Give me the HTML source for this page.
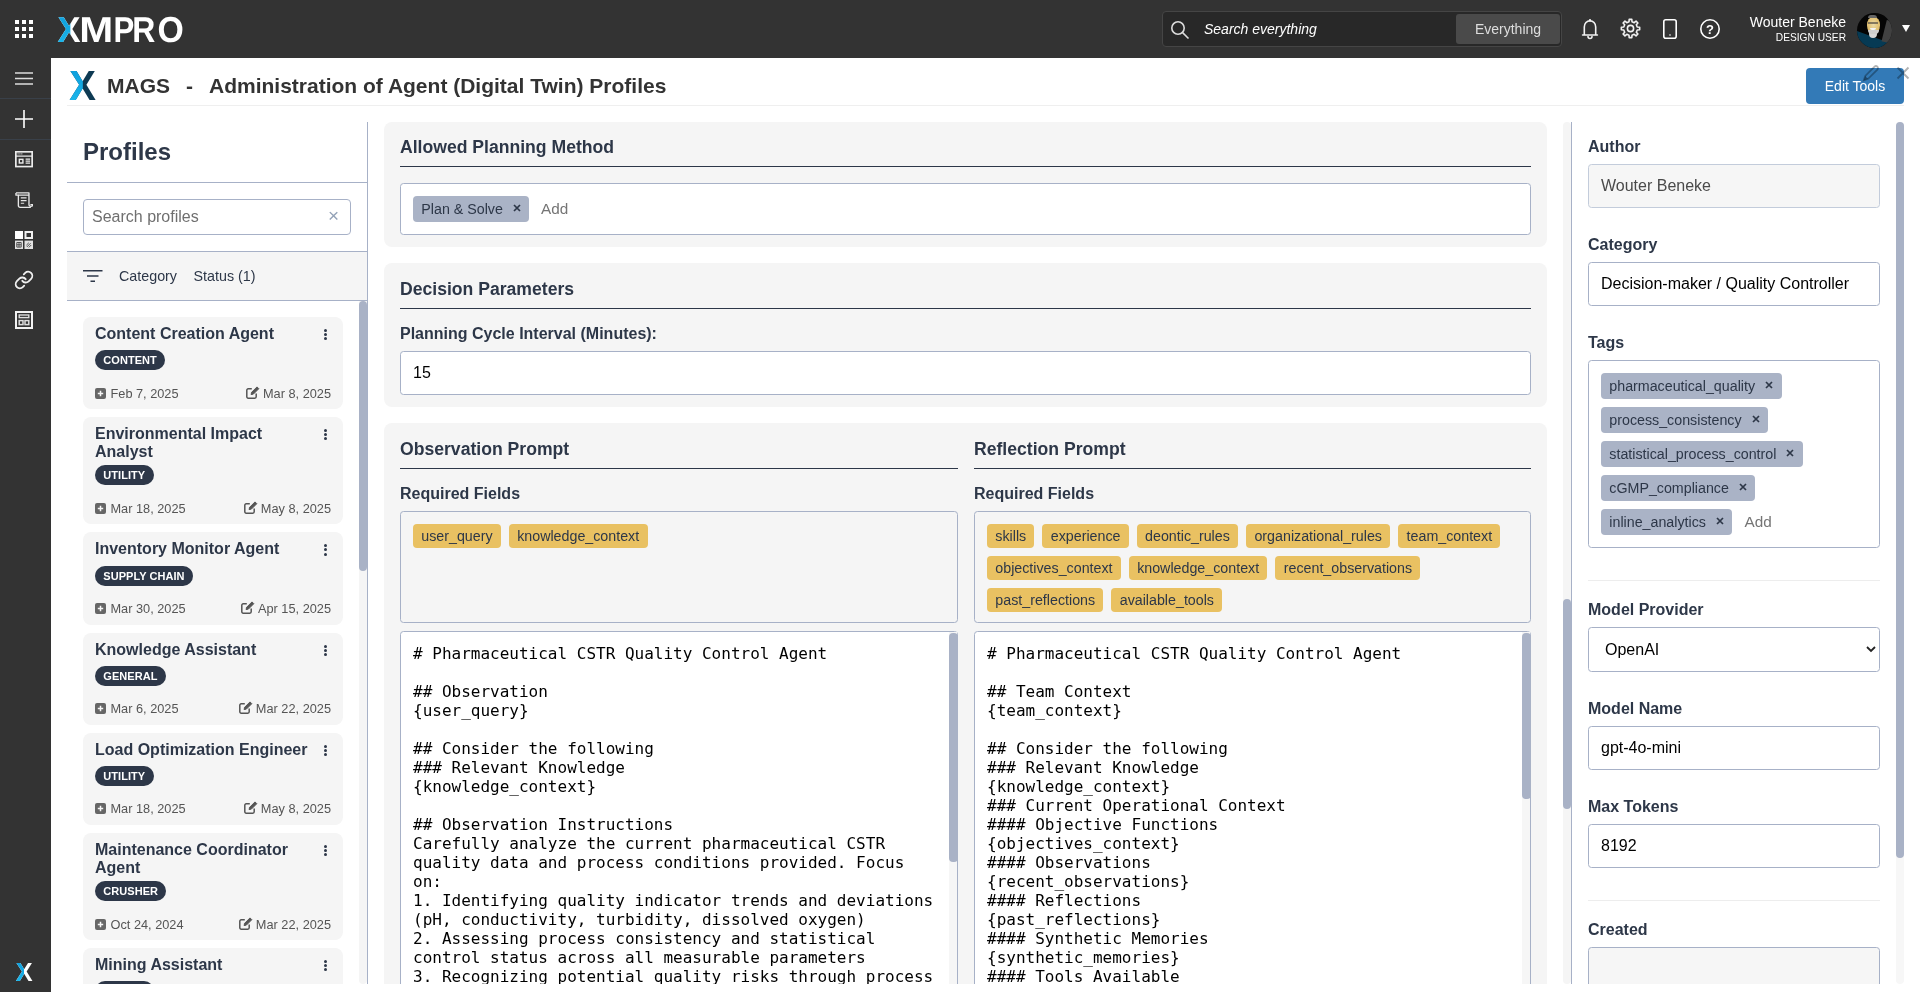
<!DOCTYPE html>
<html lang="en">
<head>
<meta charset="utf-8">
<title>MAGS - Administration of Agent (Digital Twin) Profiles</title>
<style>
*{box-sizing:border-box;margin:0;padding:0}
html,body{width:1920px;height:992px;overflow:hidden;background:#fff;font-family:"Liberation Sans",Arial,sans-serif;color:#2d3748}
#root{position:absolute;left:0;top:0;width:1920px;height:992px;will-change:transform}
#topbar{position:absolute;left:0;top:0;width:1920px;height:58px;background:#333}
#sidebar{position:absolute;left:0;top:58px;width:51px;height:934px;background:#333}
#sidebar .sep{position:absolute;left:0;width:51px;height:1px;background:#394049}
svg{display:block}
.ico{position:absolute}
#logo{position:absolute;left:57px;top:8px;font-size:36px;line-height:42px;font-weight:bold;color:#fff;letter-spacing:-1.8px}
#logo .x{background:linear-gradient(90deg,#19b5e9 0,#19b5e9 46%,#fff 46%);-webkit-background-clip:text;background-clip:text;color:transparent}
#xlogo{position:absolute;left:15px;top:902px;font-size:23px;font-weight:bold;line-height:24px;background:linear-gradient(90deg,#19b5e9 0,#19b5e9 50%,#fff 50%);-webkit-background-clip:text;background-clip:text;color:transparent}
#avatar{position:absolute;left:1857px;top:12.500px;width:35px;height:35px;border-radius:50%;background:#050505;overflow:hidden}
#avatar i{position:absolute;display:block}
#avatar .t{left:-8px;top:15px;width:48px;height:30px;background:#063a54;transform:rotate(20deg);transform-origin:0 0}
#avatar .g{left:27px;top:8px;width:12px;height:22px;background:#414141;transform:rotate(14deg)}
#avatar .n{left:11.500px;top:19px;width:8px;height:6px;background:#d8d8d8;border-radius:2px 2px 5px 5px}
#avatar .f{left:9.500px;top:4px;width:13px;height:17px;border-radius:45% 45% 50% 50%;background:radial-gradient(ellipse at 50% 45%,#ead9a6 0,#e3c273 55%,#caa861 100%)}
#avatar .h{left:11px;top:2.500px;width:9px;height:3px;border-radius:4px 4px 0 0;background:#666}
#avatar .e{left:11px;top:9.500px;width:10px;height:1.500px;background:#6b6250;opacity:.8}
#avatar .m{left:13px;top:15.500px;width:6px;height:2px;background:#f3f3f3;border-radius:0 0 3px 3px}
#avatar .b{left:10.500px;top:17px;width:11px;height:4px;border-radius:0 0 6px 6px;background:#cfcfcf}
/* top bar */
#search{position:absolute;left:1162px;top:11px;width:400px;height:36px;background:#282828;border:1px solid #454545;border-radius:4px}
#search .ph{position:absolute;left:41px;top:0;line-height:34px;font-size:14px;font-style:italic;color:#fff}
#search .btn{position:absolute;left:293px;top:2px;width:104px;height:30px;background:#4a4a4a;border-radius:3px;color:#ddd;font-size:14px;line-height:30px;text-align:center}
#user{position:absolute;right:74px;top:13px;text-align:right;color:#fff}
#user .n{font-size:14px;line-height:18px}
#user .r{font-size:10.200px;line-height:13px;margin-top:0}
/* header */
#hdr{position:absolute;left:67px;top:58px;width:1837px;height:48px;border-bottom:1px solid #efefef}
#hdr .t{position:absolute;left:40px;top:15px;font-size:21px;font-weight:bold;color:#333;white-space:pre;line-height:26px}
#editbtn{position:absolute;left:1806px;top:68px;width:98px;height:36px;background:#337ab7;border-radius:4px;color:#fff;font-size:14px;line-height:36px;text-align:center}
/* left panel */
#left{position:absolute;left:67px;top:122px;width:301px;height:862px;border-right:1px solid #a7b1c7;overflow:hidden}
#left h2{position:absolute;left:16px;top:16px;font-size:24px;line-height:28px;font-weight:bold;color:#2d3748}
#left .hl{position:absolute;left:0;width:300px;height:1px;background:#a7b1c7}
#sp{position:absolute;left:16px;top:77px;width:268px;height:36px;border:1px solid #a7b1c7;border-radius:4px;font-size:16px;line-height:34px;padding-left:8px;color:#6f6f6f}
#sp span{position:absolute;right:11px;top:-1px;color:#94a3b8;font-size:19px}
#fbar{position:absolute;left:0;top:130px;width:300px;height:48px;background:#f5f5f5;font-size:14.300px;line-height:48px;color:#2d3748}
#list{position:absolute;left:0;top:179px;width:300px;height:683px;overflow:hidden;padding-top:16px}
.pc{position:relative;margin:0 0 8px 16px;width:260px;background:#f5f5f5;border-radius:8px;padding:8px 12px 8.620px}
.pc .tr{min-height:21px}
.pc .ti{font-size:16px;font-weight:bold;line-height:18px;color:#2d3748;white-space:nowrap}
.pc .bd{display:inline-block;vertical-align:top;background:#2d3748;color:#fff;font-size:11px;font-weight:bold;border-radius:10px;height:20px;line-height:20px;padding:0 8.300px;margin-top:4.200px;letter-spacing:.05px}
.pc .dt{display:flex;justify-content:space-between;font-size:12.750px;color:#555;line-height:16px;height:15px;margin-top:15.400px}
.pc .dt svg{display:inline-block;vertical-align:-1px;margin-right:4.500px}
.pc .dt .d2 svg{vertical-align:-1px;margin-right:3px}
.pc .kb{position:absolute;left:240.500px;top:12px;width:3px}
.pc .kb i{display:block;width:3px;height:3px;border-radius:50%;background:#2d3748;margin-bottom:1.100px}
.sbt{position:absolute;width:8px;background:#f7f7f7}
/* middle */
#mid{position:absolute;left:384px;top:122px;width:1163px;height:862px;overflow:hidden}
.card{position:absolute;left:0;width:1163px;background:#f5f5f5;border-radius:8px}
.card h3{position:absolute;font-size:17.600px;font-weight:bold;color:#2d3748;line-height:20px}
.ul{position:absolute;height:1px;background:#2d3748}
.lbl{position:absolute;font-size:16px;font-weight:bold;color:#2d3748;line-height:20px}
.box{position:absolute;background:#fff;border:1px solid #a7b1c7;border-radius:3.500px}
.tag{display:inline-block;background:#aab3c6;color:#2d3748;border-radius:4px;font-size:14.250px;line-height:26px;height:26px;padding:0 8.500px 0 8.300px;white-space:nowrap}
.ytag{display:inline-block;vertical-align:top;background:#e9c162;color:#2d3748;border-radius:4px;font-size:14.250px;line-height:24px;height:24px;padding:0 8.300px;margin:0 8px 8px 0}
.ta{position:absolute;background:#fff;border:1px solid #a7b1c7;border-radius:3.500px;font-family:"DejaVu Sans Mono","Liberation Mono",monospace;font-size:16px;line-height:19px;color:#000;white-space:pre;padding:12px 12px;overflow:hidden}
/* right */
#right{position:absolute;left:1571px;top:122px;width:334px;height:862px;border-left:1px solid #a7b1c7;overflow:hidden}
#right .lbl{left:16px}
#right .inp{position:absolute;left:16px;width:292px;height:44px;border:1px solid #a7b1c7;border-radius:3.500px;background:#fff;font-size:16px;line-height:42px;padding-left:12px;color:#000}
.sb{position:absolute;width:7px;border-radius:4px;background:#a9b2c6}
.tag .tx{display:inline-block;margin-left:10px;vertical-align:2px}
.add{position:absolute;font-size:15.300px;line-height:26px;color:#757575}
.inp{font-size:16px;line-height:42px;padding-left:12px;color:#000}
.ybox{background:#f5f5f5;padding:12px 0 0 12px}
.trow{height:34px;white-space:nowrap}
.trow .tag{vertical-align:top}
.hr{position:absolute;left:16px;width:292px;height:1px;background:#ededed}
#right .dis{background:#f6f6f6;color:#4a4a4a;border-color:#c3ccdb}
</style>
</head>
<body><div id="root">
<div id="topbar">
<svg class="ico" style="left:15px;top:20px" width="18" height="18" viewBox="0 0 18 18" fill="#fff"><rect x="0" y="0" width="4" height="4"/><rect x="7" y="0" width="4" height="4"/><rect x="14" y="0" width="4" height="4"/><rect x="0" y="7" width="4" height="4"/><rect x="7" y="7" width="4" height="4"/><rect x="14" y="7" width="4" height="4"/><rect x="0" y="14" width="4" height="4"/><rect x="7" y="14" width="4" height="4"/><rect x="14" y="14" width="4" height="4"/></svg>
<svg id="logo" class="ico" style="left:50px;top:8px;text-rendering:geometricPrecision" width="140" height="42" viewBox="0 0 140 42" font-family="Liberation Sans, Arial, sans-serif" font-weight="bold" font-size="35.5"><title>XMPRO</title><defs><clipPath id="lh"><rect x="0" y="-40" width="13.300" height="60"/></clipPath><linearGradient id="cy" x1="0" y1="0" x2="0" y2="1"><stop offset="0" stop-color="#0d9cd9"/><stop offset=".5" stop-color="#14a9e3"/><stop offset="1" stop-color="#1fbdf0"/></linearGradient></defs><text transform="translate(7.60 33.500) scale(0.959 1)" fill="#fff">X</text><text transform="translate(29.21 33.500) scale(1.132 1)" fill="#fff">M</text><text transform="translate(63.54 33.500) scale(0.866 1)" fill="#fff">P</text><text transform="translate(82.29 33.500) scale(0.887 1)" fill="#fff">R</text><text transform="translate(107.38 33.500) scale(0.938 1)" fill="#fff">O</text><text transform="translate(7.60 33.500) scale(0.959 1)" fill="url(#cy)" clip-path="url(#lh)">X</text></svg>
<div id="search">
<svg class="ico" style="left:7px;top:8px" width="20" height="20" viewBox="0 0 20 20" fill="none" stroke="#ddd" stroke-width="1.6"><circle cx="8" cy="8" r="6.2"/><path d="M12.6 12.6 L18.5 18.5"/></svg>
<div class="ph">Search everything</div><div class="btn">Everything</div></div>
<svg class="ico" style="left:1580px;top:16px" width="20" height="24" viewBox="0 0 20 24" fill="none" stroke="#f2f2f2" stroke-width="1.600" stroke-linejoin="round" stroke-linecap="round"><path d="M2.600 19h14.800M4.300 19v-8a5.700 6.300 0 0 1 11.400 0v8"/><path d="M8 20.500a2 2 0 0 0 4 0"/><path d="M10 4.100v.6" stroke-width="2.200"/></svg>
<svg class="ico" style="left:1619.500px;top:18.200px" width="21" height="21" viewBox="0 0 21 21" fill="none" stroke="#f2f2f2" stroke-width="1.600" stroke-linejoin="round"><path d="M8.99 3.77 L9.20 1.34 L11.80 1.34 L12.01 3.77 L14.20 4.67 L16.05 3.10 L17.90 4.95 L16.33 6.80 L17.23 8.99 L19.66 9.20 L19.66 11.80 L17.23 12.01 L16.33 14.20 L17.90 16.05 L16.05 17.90 L14.20 16.33 L12.01 17.23 L11.80 19.66 L9.20 19.66 L8.99 17.23 L6.80 16.33 L4.95 17.90 L3.10 16.05 L4.67 14.20 L3.77 12.01 L1.34 11.80 L1.34 9.20 L3.77 8.99 L4.67 6.80 L3.10 4.95 L4.95 3.10 L6.80 4.67Z"/><circle cx="10.500" cy="10.500" r="3.100"/></svg>
<svg class="ico" style="left:1662px;top:18px" width="16" height="22" viewBox="0 0 16 22" fill="none" stroke="#fff" stroke-width="1.6"><rect x="1.800" y="1.800" width="12.400" height="18.400" rx="2"/><circle cx="8" cy="17" r=".8" fill="#fff" stroke="none"/></svg>
<svg class="ico" style="left:1699px;top:18px" width="22" height="22" viewBox="0 0 22 22" fill="none" stroke="#fff" stroke-width="1.6"><circle cx="11" cy="11" r="9.200"/><text x="11" y="15.500" font-family="Liberation Sans, sans-serif" font-size="13" font-weight="bold" fill="#fff" stroke="none" text-anchor="middle">?</text></svg>
<div id="user"><div class="n">Wouter Beneke</div><div class="r">DESIGN USER</div></div>
<div id="avatar"><i class="t"></i><i class="g"></i><i class="n"></i><i class="f"></i><i class="h"></i><i class="e"></i><i class="b"></i><i class="m"></i></div>
<svg class="ico" style="left:1902px;top:25px" width="8" height="7" viewBox="0 0 8 7"><path d="M0 0h8L4 7z" fill="#fff"/></svg>
</div>
<div id="sidebar">
<svg class="ico" style="left:15px;top:14px" width="18" height="13" viewBox="0 0 18 13" stroke="#ddd" stroke-width="1.500"><path d="M0 1h18M0 6.500h18M0 12h18"/></svg>
<div class="sep" style="top:40px"></div>
<svg class="ico" style="left:15px;top:52px" width="18" height="18" viewBox="0 0 18 18" stroke="#fff" stroke-width="1.600"><path d="M0 9h18M9 0v18"/></svg>
<div class="sep" style="top:81px"></div>
<svg class="ico" style="left:15px;top:93.400px" width="18" height="16.400" preserveAspectRatio="none" viewBox="0 0 18 17" fill="none" stroke="#ececec" stroke-width="1.700"><rect x=".85" y=".85" width="16.300" height="15.300"/><path d="M.85 5.300h16.300" stroke-width="1.300"/><path d="M2.600 3h.9M4.500 3h.9M6.400 3h.9" stroke-width="1.300"/><rect x="3.600" y="7.900" width="5" height="5.300" fill="#ececec" stroke="none"/><rect x="5" y="9.400" width="2.200" height="2.300" fill="#333" stroke="none"/><path d="M10.600 8.500h4.500M10.600 10.550h4.500M10.600 12.600h4.500" stroke-width="1.300"/></svg>
<svg class="ico" style="left:15px;top:133.800px" width="18.300" height="16.200" preserveAspectRatio="none" viewBox="0 0 19 18" fill="none" stroke="#e8e8e8" stroke-width="1.400" stroke-linejoin="round"><path d="M1 1h13.500v13a2 2 0 0 0 4 0h-2.500"/><path d="M3.500 3v12a2 2 0 0 0 2 2h11"/><path d="M1 1v2.500h13.500"/><path d="M6 6.500h6M6 9.500h6M6 12.500h3.500" stroke-width="1.300"/></svg>
<svg class="ico" style="left:15px;top:173px" width="18" height="18" viewBox="0 0 18 18" fill="none"><rect x="0" y="0" width="8" height="8" fill="#fff"/><rect x="10.500" y="1" width="6.500" height="6" stroke="#f0f0f0" stroke-width="2"/><rect x="0" y="9.600" width="8" height="8.400" fill="#e2e2e2"/><path d="M1.800 11.500h4.400v4.600h-4.400zM1.800 13.800h4.400M4 11.500v4.600" stroke="#444" stroke-width=".9"/><rect x="9.500" y="9.600" width="8.500" height="8.400" fill="#e2e2e2"/><path d="M11.800 16l3.800-3.800M11.400 14.200l2.400-2.400M13.800 16.400l2.400-2.400" stroke="#444" stroke-width=".9"/></svg>
<svg class="ico" style="left:14px;top:212px" width="20" height="20" viewBox="0 0 24 24" fill="none" stroke="#f0f0f0" stroke-width="2.200" stroke-linecap="round" stroke-linejoin="round"><path d="M10 13a5 5 0 0 0 7.540.54l3-3a5 5 0 0 0-7.070-7.070l-1.720 1.710"/><path d="M14 11a5 5 0 0 0-7.540-.54l-3 3a5 5 0 0 0 7.070 7.070l1.710-1.710"/></svg>
<svg class="ico" style="left:15px;top:253px" width="18" height="18" viewBox="0 0 18 18" fill="none" stroke="#f2f2f2" stroke-width="2"><rect x="1" y="1" width="16" height="16"/><rect x="4.200" y="4" width="9.600" height="2.600" stroke-width="1.400" stroke="#dcdcdc"/><rect x="4.200" y="9.600" width="3.800" height="4" stroke-width="1.500" stroke="#dcdcdc"/><rect x="10" y="9.600" width="3.800" height="4" stroke-width="1.500" stroke="#dcdcdc"/></svg>
<svg class="ico" style="left:10px;top:900px" width="30" height="28" viewBox="0 0 30 28" font-family="Liberation Sans, Arial, sans-serif" font-weight="bold" font-size="25.300"><defs><clipPath id="lh2"><rect x="0" y="0" width="14" height="28"/></clipPath></defs><text y="22.600" x="5.800" fill="#fff">X</text><text y="22.600" x="5.800" fill="url(#cy)" clip-path="url(#lh2)">X</text></svg>
</div>
<div id="hdr"><svg class="ico" style="left:0;top:8px" width="34" height="40" viewBox="0 0 34 40" font-family="Liberation Sans, Arial, sans-serif" font-weight="bold" font-size="42.200"><defs><clipPath id="lh3"><rect x="0" y="-40" width="14.300" height="60"/></clipPath></defs><text transform="translate(2.250 34.400) scale(.95 1)" fill="#0e3a53">X</text><text transform="translate(2.250 34.400) scale(.95 1)" fill="url(#cy)" clip-path="url(#lh3)">X</text></svg><div class="t">MAGS</div><div class="t" style="left:119px">-</div><div class="t" style="left:142px">Administration of Agent (Digital Twin) Profiles</div></div>
<div id="editbtn">Edit Tools</div>
<svg class="ico" style="left:1858px;top:60px" width="56" height="26" viewBox="0 0 56 26" fill="none" stroke="rgba(0,0,0,.3)" stroke-width="1.800"><g transform="translate(12.600 13.500) rotate(45)"><path d="M-2 -7.600a2 2 0 0 1 4 0V5.500L0 9.600L-2 5.500Z"/><path d="M-2 5.500L0 9.600L2 5.500Z" fill="rgba(0,0,0,.3)" stroke="none"/></g><path d="M39.500 7.500l11 11M50.500 7.500l-11 11" stroke-width="1.900"/></svg>
<div id="left">
<h2>Profiles</h2>
<div class="hl" style="top:60px"></div>
<div id="sp">Search profiles<span>&#215;</span></div>
<div class="hl" style="top:129px"></div>
<div id="fbar"><svg class="ico" style="left:16px;top:18px" width="20" height="12" viewBox="0 0 20 12" stroke="#2d3748" stroke-width="1.400"><path d="M0 .8h19.500M4 6h11.500M7.500 11.200h4.500"/></svg><span style="position:absolute;left:52px">Category</span><span style="position:absolute;left:126.500px">Status (1)</span></div>
<div class="hl" style="top:178px"></div>
<div id="list">
<div class="pc"><div class="tr"><div class="ti">Content Creation Agent</div></div><div class="kb"><i></i><i></i><i></i></div><div class="bd">CONTENT</div><div class="dt"><span class="d1"><svg width="11" height="11" viewBox="0 0 11 11"><rect width="11" height="11" rx="2" fill="#666"/><path d="M5.500 2.800v5.400M2.800 5.500h5.400" stroke="#f5f5f5" stroke-width="1.500"/></svg>Feb 7, 2025</span><span class="d2"><svg width="14" height="13" viewBox="0 0 14 13" fill="none" stroke="#555" stroke-width="1.500" stroke-linejoin="round"><path d="M10.200 7.500v3.300a1.400 1.400 0 0 1-1.400 1.400h-6.600a1.400 1.400 0 0 1-1.400-1.400v-6.600a1.400 1.400 0 0 1 1.400-1.400h3.600"/><path d="M11 .9l1.800 1.800-5.400 5.400-2.300.5.500-2.300z" fill="#555" stroke-width="1"/></svg>Mar 8, 2025</span></div></div>
<div class="pc"><div class="tr"><div class="ti">Environmental Impact<br>Analyst</div></div><div class="kb"><i></i><i></i><i></i></div><div class="bd">UTILITY</div><div class="dt"><span class="d1"><svg width="11" height="11" viewBox="0 0 11 11"><rect width="11" height="11" rx="2" fill="#666"/><path d="M5.500 2.800v5.400M2.800 5.500h5.400" stroke="#f5f5f5" stroke-width="1.500"/></svg>Mar 18, 2025</span><span class="d2"><svg width="14" height="13" viewBox="0 0 14 13" fill="none" stroke="#555" stroke-width="1.500" stroke-linejoin="round"><path d="M10.200 7.500v3.300a1.400 1.400 0 0 1-1.400 1.400h-6.600a1.400 1.400 0 0 1-1.400-1.400v-6.600a1.400 1.400 0 0 1 1.400-1.400h3.600"/><path d="M11 .9l1.800 1.800-5.400 5.400-2.300.5.500-2.300z" fill="#555" stroke-width="1"/></svg>May 8, 2025</span></div></div>
<div class="pc"><div class="tr"><div class="ti">Inventory Monitor Agent</div></div><div class="kb"><i></i><i></i><i></i></div><div class="bd">SUPPLY CHAIN</div><div class="dt"><span class="d1"><svg width="11" height="11" viewBox="0 0 11 11"><rect width="11" height="11" rx="2" fill="#666"/><path d="M5.500 2.800v5.400M2.800 5.500h5.400" stroke="#f5f5f5" stroke-width="1.500"/></svg>Mar 30, 2025</span><span class="d2"><svg width="14" height="13" viewBox="0 0 14 13" fill="none" stroke="#555" stroke-width="1.500" stroke-linejoin="round"><path d="M10.200 7.500v3.300a1.400 1.400 0 0 1-1.400 1.400h-6.600a1.400 1.400 0 0 1-1.400-1.400v-6.600a1.400 1.400 0 0 1 1.400-1.400h3.600"/><path d="M11 .9l1.800 1.800-5.400 5.400-2.300.5.500-2.300z" fill="#555" stroke-width="1"/></svg>Apr 15, 2025</span></div></div>
<div class="pc"><div class="tr"><div class="ti">Knowledge Assistant</div></div><div class="kb"><i></i><i></i><i></i></div><div class="bd">GENERAL</div><div class="dt"><span class="d1"><svg width="11" height="11" viewBox="0 0 11 11"><rect width="11" height="11" rx="2" fill="#666"/><path d="M5.500 2.800v5.400M2.800 5.500h5.400" stroke="#f5f5f5" stroke-width="1.500"/></svg>Mar 6, 2025</span><span class="d2"><svg width="14" height="13" viewBox="0 0 14 13" fill="none" stroke="#555" stroke-width="1.500" stroke-linejoin="round"><path d="M10.200 7.500v3.300a1.400 1.400 0 0 1-1.400 1.400h-6.600a1.400 1.400 0 0 1-1.400-1.400v-6.600a1.400 1.400 0 0 1 1.400-1.400h3.600"/><path d="M11 .9l1.800 1.800-5.400 5.400-2.300.5.500-2.300z" fill="#555" stroke-width="1"/></svg>Mar 22, 2025</span></div></div>
<div class="pc"><div class="tr"><div class="ti">Load Optimization Engineer</div></div><div class="kb"><i></i><i></i><i></i></div><div class="bd">UTILITY</div><div class="dt"><span class="d1"><svg width="11" height="11" viewBox="0 0 11 11"><rect width="11" height="11" rx="2" fill="#666"/><path d="M5.500 2.800v5.400M2.800 5.500h5.400" stroke="#f5f5f5" stroke-width="1.500"/></svg>Mar 18, 2025</span><span class="d2"><svg width="14" height="13" viewBox="0 0 14 13" fill="none" stroke="#555" stroke-width="1.500" stroke-linejoin="round"><path d="M10.200 7.500v3.300a1.400 1.400 0 0 1-1.400 1.400h-6.600a1.400 1.400 0 0 1-1.400-1.400v-6.600a1.400 1.400 0 0 1 1.400-1.400h3.600"/><path d="M11 .9l1.800 1.800-5.400 5.400-2.300.5.500-2.300z" fill="#555" stroke-width="1"/></svg>May 8, 2025</span></div></div>
<div class="pc"><div class="tr"><div class="ti">Maintenance Coordinator<br>Agent</div></div><div class="kb"><i></i><i></i><i></i></div><div class="bd">CRUSHER</div><div class="dt"><span class="d1"><svg width="11" height="11" viewBox="0 0 11 11"><rect width="11" height="11" rx="2" fill="#666"/><path d="M5.500 2.800v5.400M2.800 5.500h5.400" stroke="#f5f5f5" stroke-width="1.500"/></svg>Oct 24, 2024</span><span class="d2"><svg width="14" height="13" viewBox="0 0 14 13" fill="none" stroke="#555" stroke-width="1.500" stroke-linejoin="round"><path d="M10.200 7.500v3.300a1.400 1.400 0 0 1-1.400 1.400h-6.600a1.400 1.400 0 0 1-1.400-1.400v-6.600a1.400 1.400 0 0 1 1.400-1.400h3.600"/><path d="M11 .9l1.800 1.800-5.400 5.400-2.300.5.500-2.300z" fill="#555" stroke-width="1"/></svg>Mar 22, 2025</span></div></div>
<div class="pc"><div class="tr"><div class="ti">Mining Assistant</div></div><div class="kb"><i></i><i></i><i></i></div><div class="bd">UTILITY</div><div class="dt"><span class="d1"><svg width="11" height="11" viewBox="0 0 11 11"><rect width="11" height="11" rx="2" fill="#666"/><path d="M5.500 2.800v5.400M2.800 5.500h5.400" stroke="#f5f5f5" stroke-width="1.500"/></svg>Mar 2, 2025</span><span class="d2"><svg width="14" height="13" viewBox="0 0 14 13" fill="none" stroke="#555" stroke-width="1.500" stroke-linejoin="round"><path d="M10.200 7.500v3.300a1.400 1.400 0 0 1-1.400 1.400h-6.600a1.400 1.400 0 0 1-1.400-1.400v-6.600a1.400 1.400 0 0 1 1.400-1.400h3.600"/><path d="M11 .9l1.800 1.800-5.400 5.400-2.300.5.500-2.300z" fill="#555" stroke-width="1"/></svg>Mar 22, 2025</span></div></div>
</div>
<div class="sbt" style="left:292px;top:179px;height:683px;background:#f5f5f5;border-radius:0 0 4px 4px"></div>
<div class="sb" style="left:292px;top:179px;height:270px;width:8px"></div>
</div>
<div id="mid">
<div class="card" style="top:0;height:125px">
<h3 style="left:16px;top:15px">Allowed Planning Method</h3>
<div class="ul" style="left:16px;top:44px;width:1131px"></div>
<div class="box" style="left:16px;top:61px;width:1131px;height:52px"><span class="tag" style="position:absolute;left:12px;top:12px">Plan &amp; Solve<svg class="tx" width="8" height="8" viewBox="0 0 8 8"><path d="M1 1l6 6M7 1l-6 6" stroke="#2d3748" stroke-width="1.700"/></svg></span><span class="add" style="left:140px;top:12px">Add</span></div>
</div>
<div class="card" style="top:141px;height:144px">
<h3 style="left:16px;top:16px">Decision Parameters</h3>
<div class="ul" style="left:16px;top:45px;width:1131px"></div>
<div class="lbl" style="left:16px;top:61px">Planning Cycle Interval (Minutes):</div>
<div class="box inp" style="left:16px;top:88px;width:1131px;height:44px">15</div>
</div>
<div class="card" style="top:301px;height:700px">
<h3 style="left:16px;top:16px">Observation Prompt</h3>
<div class="ul" style="left:16px;top:45px;width:558px"></div>
<div class="lbl" style="left:16px;top:61px">Required Fields</div>
<div class="box ybox" style="left:16px;top:88px;width:558px;height:112px"><span class="ytag">user_query</span><span class="ytag">knowledge_context</span></div>
<div class="ta" style="left:16px;top:208px;width:558px;height:480px"># Pharmaceutical CSTR Quality Control Agent

## Observation
{user_query}

## Consider the following
### Relevant Knowledge
{knowledge_context}

## Observation Instructions
Carefully analyze the current pharmaceutical CSTR
quality data and process conditions provided. Focus
on:
1. Identifying quality indicator trends and deviations
(pH, conductivity, turbidity, dissolved oxygen)
2. Assessing process consistency and statistical
control status across all measurable parameters
3. Recognizing potential quality risks through process
stability analysis and parameter correlation
4. Evaluating batch-to-batch variation and compliance</div>
<div class="sbt" style="left:565px;top:209px;width:8px;height:478px;background:#f6f6f6"></div>
<div class="sb" style="left:565.200px;top:209.600px;width:8.600px;height:229px"></div>
<h3 style="left:590px;top:16px">Reflection Prompt</h3>
<div class="ul" style="left:590px;top:45px;width:557px"></div>
<div class="lbl" style="left:590px;top:61px">Required Fields</div>
<div class="box ybox" style="left:590px;top:88px;width:557px;height:112px"><span class="ytag">skills</span><span class="ytag">experience</span><span class="ytag">deontic_rules</span><span class="ytag">organizational_rules</span><span class="ytag">team_context</span><span class="ytag">objectives_context</span><span class="ytag">knowledge_context</span><span class="ytag">recent_observations</span><span class="ytag">past_reflections</span><span class="ytag">available_tools</span></div>
<div class="ta" style="left:590px;top:208px;width:557px;height:480px"># Pharmaceutical CSTR Quality Control Agent

## Team Context
{team_context}

## Consider the following
### Relevant Knowledge
{knowledge_context}
### Current Operational Context
#### Objective Functions
{objectives_context}
#### Observations
{recent_observations}
#### Reflections
{past_reflections}
#### Synthetic Memories
{synthetic_memories}
#### Tools Available
{available_tools}

## Reflection Instructions</div>
<div class="sbt" style="left:1138px;top:209px;width:8px;height:478px;background:#f6f6f6"></div>
<div class="sb" style="left:1138.200px;top:209.600px;width:8.600px;height:166px"></div>
</div>
</div>
<div class="sbt" style="left:1563px;top:122px;width:8px;height:862px;background:#f5f5f5;border-radius:4px"></div>
<div class="sb" style="left:1563px;top:599px;width:8px;height:210px"></div>
<div id="right">
<div class="lbl" style="top:15px">Author</div>
<div class="inp dis" style="top:42px">Wouter Beneke</div>
<div class="lbl" style="top:113px">Category</div>
<div class="inp" style="top:140px">Decision-maker / Quality Controller</div>
<div class="lbl" style="top:211px">Tags</div>
<div class="box" style="left:16px;top:238px;width:292px;height:188px;padding:12px 0 0 12px"><div class="trow"><span class="tag">pharmaceutical_quality<svg class="tx" width="8" height="8" viewBox="0 0 8 8"><path d="M1 1l6 6M7 1l-6 6" stroke="#2d3748" stroke-width="1.700"/></svg></span></div><div class="trow"><span class="tag">process_consistency<svg class="tx" width="8" height="8" viewBox="0 0 8 8"><path d="M1 1l6 6M7 1l-6 6" stroke="#2d3748" stroke-width="1.700"/></svg></span></div><div class="trow"><span class="tag">statistical_process_control<svg class="tx" width="8" height="8" viewBox="0 0 8 8"><path d="M1 1l6 6M7 1l-6 6" stroke="#2d3748" stroke-width="1.700"/></svg></span></div><div class="trow"><span class="tag">cGMP_compliance<svg class="tx" width="8" height="8" viewBox="0 0 8 8"><path d="M1 1l6 6M7 1l-6 6" stroke="#2d3748" stroke-width="1.700"/></svg></span></div><div class="trow"><span class="tag">inline_analytics<svg class="tx" width="8" height="8" viewBox="0 0 8 8"><path d="M1 1l6 6M7 1l-6 6" stroke="#2d3748" stroke-width="1.700"/></svg></span><span class="add" style="position:static;margin-left:12px">Add</span></div></div>
<div class="hr" style="top:458px"></div>
<div class="lbl" style="top:478px">Model Provider</div>
<div class="inp" style="top:505px;height:45px;line-height:44px;padding-left:16px">OpenAI<svg class="ico" style="left:277px;top:18px" width="10" height="7" viewBox="0 0 10 7" fill="none" stroke="#222" stroke-width="1.800"><path d="M1 1l4 4 4-4"/></svg></div>
<div class="lbl" style="top:577px">Model Name</div>
<div class="inp" style="top:604px">gpt-4o-mini</div>
<div class="lbl" style="top:675px">Max Tokens</div>
<div class="inp" style="top:702px">8192</div>
<div class="hr" style="top:778px"></div>
<div class="lbl" style="top:798px">Created</div>
<div class="inp dis" style="top:825px;border-color:#a7b1c7"></div>
<div class="sbt" style="left:324px;top:0;width:8px;height:862px;background:#f7f7f7;border-radius:4px"></div>
<div class="sb" style="left:324px;top:0;width:8px;height:736px"></div>
</div>
</div></body>
</html>
